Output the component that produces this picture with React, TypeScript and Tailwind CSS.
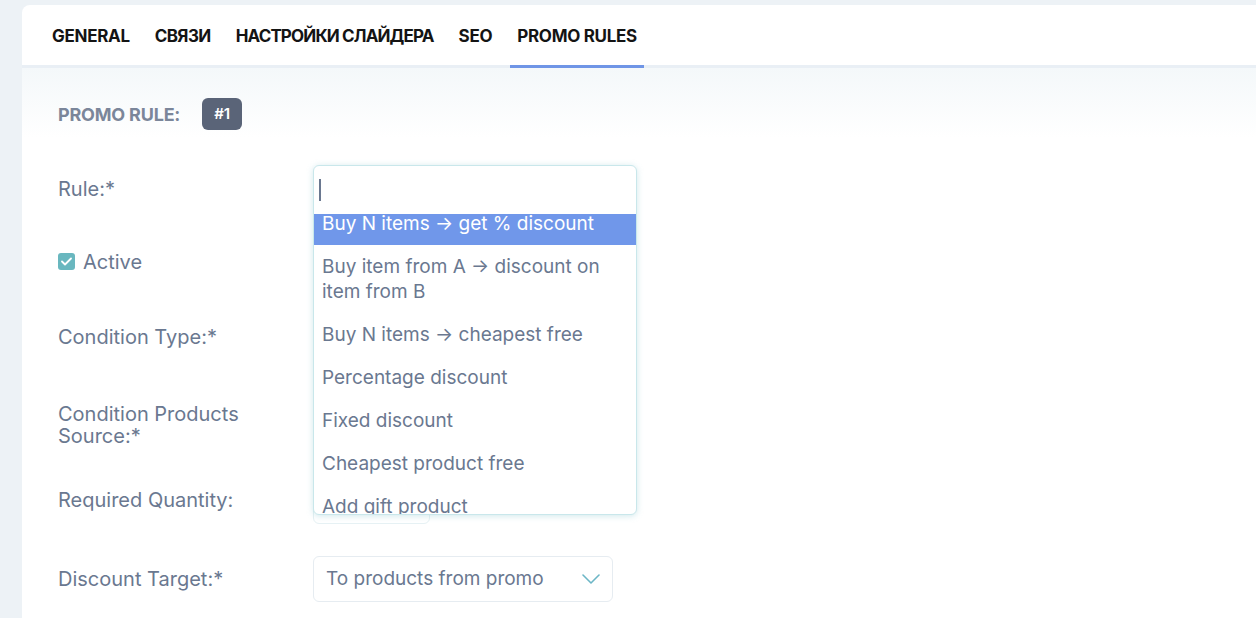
import { useState } from "react";

const tabs = [
  { name: "GENERAL", cls: "tracking-[-0.3px]" },
  { name: "СВЯЗИ", cls: "tracking-[-0.6px]" },
  { name: "НАСТРОЙКИ СЛАЙДЕРА", cls: "tracking-[-0.85px]" },
  { name: "SEO", cls: "tracking-[-0.3px]" },
  { name: "PROMO RULES", cls: "tracking-[-0.3px]" },
];

const ruleOptions = [
  "Buy N items → get % discount",
  "Buy item from A → discount on item from B",
  "Buy N items → cheapest free",
  "Percentage discount",
  "Fixed discount",
  "Cheapest product free",
  "Add gift product",
];

const Chevron = () => (
  <svg width="18" height="10" viewBox="0 0 18 10" fill="none">
    <polyline
      points="1,1 9,9 17,1"
      stroke="#6cb6c6"
      strokeWidth="1.6"
      strokeLinecap="round"
      strokeLinejoin="round"
    />
  </svg>
);

const Label = ({ children }: { children: React.ReactNode }) => (
  <div className="w-[255px] shrink-0 text-[20px] leading-[22px] text-[#6a7890]">
    {children}
  </div>
);

const App = () => {
  const [active, setActive] = useState("PROMO RULES");

  return (
    <div
      className="min-h-screen bg-[#edf2f6] pl-[22px] pt-[5px]"
      style={{ fontFamily: "Inter, 'Noto Sans', sans-serif" }}
    >
      <div className="min-h-[613px] rounded-tl-lg bg-white">
        {/* tabs */}
        <div className="flex h-[63px] gap-[11px] border-b-[3px] border-[#e9eff5] pl-[23px]">
          {tabs.map((t) => (
            <button
              key={t.name}
              onClick={() => setActive(t.name)}
              className={
                "-mb-[3px] border-b-[3px] px-[7px] pt-[3px] text-[17px] font-bold text-[#141414] " +
                t.cls +
                " " +
                (t.name === active ? "border-[#6f95e6]" : "border-transparent")
              }
            >
              {t.name}
            </button>
          ))}
        </div>

        <div className="bg-gradient-to-b from-[#f4f8fa] to-white to-[70px] pl-[36px] pt-[30px]">
          <div className="flex items-center gap-[22px]">
            <span className="text-[18px] font-bold tracking-[-0.2px] text-[#7b869a]">PROMO RULE:</span>
            <span className="flex h-[32px] w-[40px] items-center justify-center rounded-md bg-[#5a6478] text-[15px] font-semibold text-white">
              #1
            </span>
          </div>

          {/* Rule */}
          <div className="mt-[35px] flex h-[47px] items-center">
            <Label>Rule:*</Label>
            <div className="relative h-[47px] w-[324px]">
              <div className="absolute left-0 top-0 z-10 flex h-[350px] w-[324px] flex-col overflow-hidden rounded-md border border-[#c9e7eb] bg-white shadow-[0_1px_6px_rgba(120,190,200,0.35)]">
                <div className="flex h-[48px] shrink-0 items-center pl-[5px]">
                  <span className="h-[22px] w-[2px] bg-[#6a7890]" />
                </div>
                <div className="flex-1 overflow-hidden">
                  <ul className="-mt-[12px]">
                    {ruleOptions.map((o, i) => (
                      <li
                        key={o}
                        className={
                          "px-[8px] py-[9px] text-[19px] leading-[25px] " +
                          (i === 0 ? "bg-[#7097ea] text-white" : "text-[#6a7890]")
                        }
                      >
                        {o}
                      </li>
                    ))}
                  </ul>
                </div>
              </div>
            </div>
          </div>

          {/* Active */}
          <div className="mt-[26px] flex h-[47px] items-center">
            <label className="flex items-center gap-[8px] text-[20px] text-[#6a7890]">
              <span className="flex h-[17px] w-[17px] items-center justify-center rounded-[3px] bg-[#69b7bf]">
                <svg width="11" height="9" viewBox="0 0 11 9" fill="none">
                  <polyline
                    points="1,4.5 4,7.5 10,1.5"
                    stroke="white"
                    strokeWidth="1.8"
                    strokeLinecap="round"
                    strokeLinejoin="round"
                  />
                </svg>
              </span>
              Active
            </label>
          </div>

          {/* Condition Type */}
          <div className="mt-[28px] flex h-[47px] items-center">
            <Label>Condition Type:*</Label>
            <div className="h-[46px] w-[300px] rounded-md border border-[#e6ecf1]" />
          </div>

          {/* Condition Products Source */}
          <div className="mt-[41px] flex h-[47px] items-center">
            <Label>
              Condition Products
              <br />
              Source:*
            </Label>
            <div className="h-[46px] w-[300px] rounded-md border border-[#e6ecf1]" />
          </div>

          {/* Required Quantity */}
          <div className="mt-[28px] flex h-[48px] items-center">
            <Label>Required Quantity:</Label>
            <div className="h-[48px] w-[117px] rounded-md border border-[#e6f1f4]" />
          </div>

          {/* Discount Target */}
          <div className="mt-[32px] flex h-[46px] items-center">
            <Label>Discount Target:*</Label>
            <div className="flex h-[46px] w-[300px] items-center justify-between rounded-md border border-[#e6ecf1] pl-[12px] pr-[12px] text-[19px] text-[#6a7890]">
              To products from promo
              <Chevron />
            </div>
          </div>
        </div>
      </div>
    </div>
  );
};

export default App;
